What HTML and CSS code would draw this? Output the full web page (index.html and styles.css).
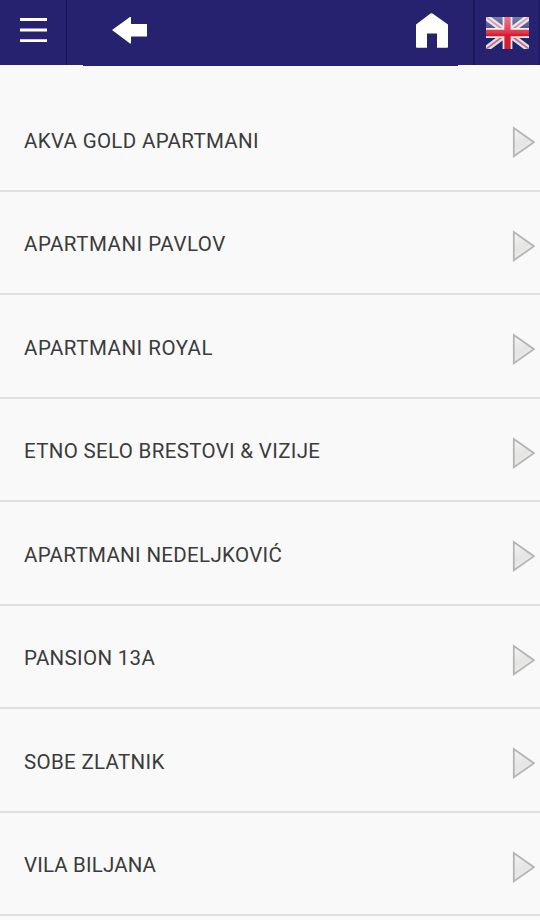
FILE: index.html
```html
<!DOCTYPE html>
<html lang="sr-Latn">
  <head>
    <meta charset="UTF-8" />
    <title>Smeštaj</title>
    <meta name="viewport" content="width=device-width,initial-scale=1" />
    <link rel="stylesheet" href="styles.css">
  </head>
  <body>
    <svg width="0" height="0" class="defs">
      <defs>
        <linearGradient id="arrowFill" x1="0" y1="0" x2="0.4" y2="1">
          <stop offset="0" stop-color="#f6f6f6" />
          <stop offset="0.6" stop-color="#e4e5e1" />
          <stop offset="1" stop-color="#f0f0ee" />
        </linearGradient>
        <linearGradient id="flagShine" x1="0" y1="0" x2="0" y2="1">
          <stop offset="0" stop-color="#fff" stop-opacity="0.42" />
          <stop offset="0.5" stop-color="#fff" stop-opacity="0.12" />
          <stop offset="0.55" stop-color="#fff" stop-opacity="0" />
        </linearGradient>
        <symbol id="arrow" viewBox="0 0 24 32">
          <path d="M2.8 2 L23 16.2 L2.8 30.3 Z" fill="url(#arrowFill)" stroke="#b5b5b5" stroke-width="1.8" />
        </symbol>
      </defs>
    </svg>

    <div class="header">
      <a href="#" class="menu-btn">
        <svg width="27" height="26" viewBox="0 0 27 26">
          <path d="M0 1.5H27M0 12H27M0 22.6H27" stroke="#fff" stroke-width="2.9" />
        </svg>
      </a>
      <div class="title-bar">
        <a href="#">
          <svg width="36" height="28" viewBox="0 0 36 28">
            <path d="M0 14 L18 1 H19 V8 H35 V20.5 H19 V27.5 H18 Z" fill="#fff" />
          </svg>
        </a>
        <a href="#">
          <svg width="32" height="36" viewBox="0 0 32 36">
            <path d="M0 11.5 L14.5 0.6 Q15.5 -0.2 16.5 0.6 L32 11.5 V34 Q32 34.7 31 34.7 H21 V20.5 H11 V34.7 H1 Q0 34.7 0 34 Z" fill="#fff" />
          </svg>
        </a>
      </div>
      <a href="#" class="lang-btn">
        <svg width="43" height="32" viewBox="0 0 44 32" preserveAspectRatio="none">
          <path d="M0 0H44V32H0Z" fill="#18286f" />
          <path d="M0 0L44 32M44 0L0 32" stroke="#dedeea" stroke-width="6.2" />
          <path d="M0 0L22 16M44 0L22 16M0 32L22 16M44 32L22 16" stroke="#d86577" stroke-width="1.8" />
          <path d="M22 0V32M0 16H44" stroke="#f3e6ec" stroke-width="10" />
          <path d="M22 0V32M0 16H44" stroke="#d71c30" stroke-width="6.4" />
          <path d="M0 0H44V32H0Z" fill="url(#flagShine)" />
        </svg>
      </a>
    </div>

    <div class="list">
      <a href="#" class="item"><span>AKVA GOLD APARTMANI</span><svg class="arrow"><use href="#arrow" /></svg></a>
      <a href="#" class="item wide"><span>APARTMANI PAVLOV</span><svg class="arrow"><use href="#arrow" /></svg></a>
      <a href="#" class="item wide"><span>APARTMANI ROYAL</span><svg class="arrow"><use href="#arrow" /></svg></a>
      <a href="#" class="item"><span>ETNO SELO BRESTOVI &amp; VIZIJE</span><svg class="arrow"><use href="#arrow" /></svg></a>
      <a href="#" class="item"><span>APARTMANI NEDELJKOVIĆ</span><svg class="arrow"><use href="#arrow" /></svg></a>
      <a href="#" class="item"><span>PANSION 13A</span><svg class="arrow"><use href="#arrow" /></svg></a>
      <a href="#" class="item"><span>SOBE ZLATNIK</span><svg class="arrow"><use href="#arrow" /></svg></a>
      <a href="#" class="item tight"><span>VILA BILJANA</span><svg class="arrow"><use href="#arrow" /></svg></a>
    </div>
  </body>
</html>
```
FILE: styles.css
```css
* {
  box-sizing: border-box;
}
body {
  margin: 0;
  height: 920px;
  overflow: hidden;
  background: #f9f9f9;
  font-family: Roboto, "Liberation Sans", sans-serif;
}
a {
  color: inherit;
  text-decoration: none;
}
svg {
  display: block;
  flex: none;
}
.defs {
  position: absolute;
}
.header {
  display: flex;
  height: 65px;
  background: #26226f;
}
.menu-btn {
  width: 67px;
  padding: 18px 0 0 20px;
  border-right: 1px solid #17134f;
}
.title-bar {
  flex: 1;
  display: flex;
  justify-content: space-between;
  height: 66px;
  margin: 0 15px 0 16px;
  padding: 13px 10px 0 29px;
  background: #26226f;
}
.title-bar a:first-child {
  padding-top: 3px;
}
.lang-btn {
  width: 67px;
  padding: 17px 0 0 11px;
  border-left: 2px solid #1b175b;
  border-right: 1px solid #1b175b;
}
.list {
  padding-top: 23px;
}
.item {
  display: flex;
  align-items: center;
  justify-content: space-between;
  height: 103.5px;
  padding: 4px 5px 0 24px;
  border-bottom: 2px solid #dfdfdf;
  color: #3b3b3b;
  font-size: 20.5px;
  letter-spacing: 0.33px;
}
.wide {
  letter-spacing: 0.52px;
}
.tight {
  letter-spacing: 0.15px;
}
.arrow {
  width: 24px;
  height: 32px;
  margin-top: 3px;
}
```
